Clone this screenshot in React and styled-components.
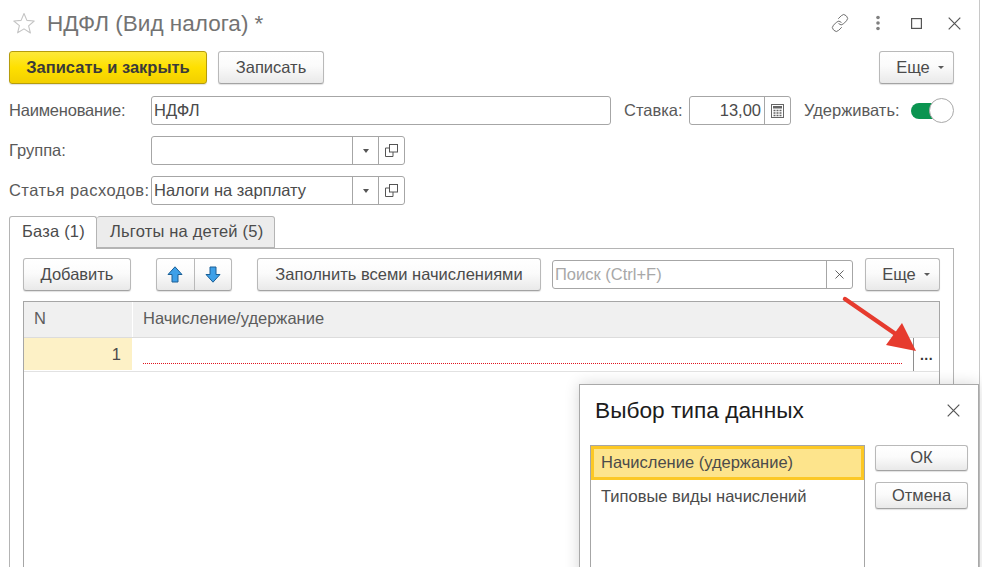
import React from "react";
import styled, { createGlobalStyle } from "styled-components";

const GlobalStyle = createGlobalStyle`
  html, body {
    margin: 0;
    padding: 0;
    background: #fff;
    overflow: hidden;
  }
  * {
    box-sizing: border-box;
  }
`;

const Screen = styled.div`
  position: relative;
  width: 982px;
  height: 567px;
  overflow: hidden;
  background: #fff;
  font-family: "Liberation Sans", Arial, sans-serif;
  font-size: 16.5px;
  color: #4b4b4b;
`;

const Win = styled.div`
  width: 980px;
  height: 567px;
  padding: 0 25px 0 9px;
  border-right: 1px solid #c8c8c8;
  overflow: hidden;
`;

const TitleBar = styled.div`
  height: 51px;
  display: flex;
  align-items: flex-start;
  padding: 12px 0 0 3px;
`;

const PageTitle = styled.div`
  margin-left: 11px;
  font-size: 22.5px;
  line-height: 24px;
  color: #737373;
  flex: 1;
`;

const TitleIcons = styled.div`
  display: flex;
  align-items: center;
  height: 22px;
  margin-right: -19px;
`;

const IconSlot = styled.div`
  width: 38px;
  height: 22px;
  display: flex;
  align-items: center;
  justify-content: center;
`;

const Toolbar = styled.div`
  display: flex;
  align-items: flex-start;
  height: 45px;
`;

const Button = styled.button`
  height: ${(p) => p.$h || 33}px;
  width: ${(p) => p.$w}px;
  margin-left: ${(p) => p.$ml || 0}px;
  padding: 0 0 1px ${(p) => p.$pl || 0}px;
  border: 1px solid #b9b9b9;
  border-bottom-color: #a3a3a3;
  border-radius: 3px;
  background: linear-gradient(#fff 0%, #fbfbfb 45%, #e9e9e9 100%);
  box-shadow: 0 1px 1px rgba(0, 0, 0, 0.12);
  font: inherit;
  color: #4b4b4b;
  display: flex;
  align-items: center;
  justify-content: center;
  flex: none;
`;

const PrimaryButton = styled(Button)`
  border-color: #b59c0c;
  background: linear-gradient(#fde93a 0%, #fee000 50%, #f2cf00 100%);
  font-weight: 700;
  color: #3a3a3a;
`;

const Caret = styled.span`
  width: 0;
  height: 0;
  margin-left: 8px;
  border-left: 3px solid transparent;
  border-right: 3px solid transparent;
  border-top: 3px solid #5a5a5a;
`;

const Spacer = styled.div`
  flex: 1;
`;

const FormRow = styled.div`
  display: flex;
  align-items: center;
  height: 29px;
  margin-bottom: 11px;
`;

const Label = styled.div`
  width: ${(p) => p.$w}px;
  flex: none;
  margin-left: ${(p) => p.$ml || 0}px;
  letter-spacing: ${(p) => p.$ls || 0}px;
  color: #595959;
  white-space: nowrap;
`;

const Field = styled.div`
  width: ${(p) => p.$w}px;
  height: ${(p) => p.$h || 29}px;
  margin-left: ${(p) => p.$ml || 0}px;
  flex: none;
  display: flex;
  border: 1px solid #a6a6a6;
  border-radius: 3px;
  background: #fff;
`;

const FieldText = styled.div`
  flex: 1;
  min-width: 0;
  padding: 0 ${(p) => (p.$right ? "3px" : "2px")};
  line-height: 26px;
  text-align: ${(p) => (p.$right ? "right" : "left")};
  color: ${(p) => (p.$muted ? "#a8a8a8" : "#4b4b4b")};
  white-space: nowrap;
`;

const FieldBtn = styled.div`
  width: ${(p) => p.$w || 26}px;
  flex: none;
  border-left: 1px solid #a6a6a6;
  display: flex;
  align-items: center;
  justify-content: center;
`;

const SmallCaret = styled.span`
  width: 0;
  height: 0;
  border-left: 3.5px solid transparent;
  border-right: 3.5px solid transparent;
  border-top: 4px solid #555;
`;

const Switch = styled.div`
  position: relative;
  width: 43px;
  height: 25px;
  margin-left: 1px;
  flex: none;
  display: flex;
  align-items: center;
`;

const SwitchTrack = styled.div`
  width: 34px;
  height: 16px;
  border-radius: 8px;
  background: #0a9450;
`;

const SwitchKnob = styled.div`
  position: absolute;
  right: 0;
  top: 0;
  width: 25px;
  height: 25px;
  border-radius: 50%;
  background: #fff;
  border: 1px solid #a9a9a9;
`;

const Tabs = styled.div`
  display: flex;
  height: 33px;
  position: relative;
  z-index: 1;
`;

const Tab = styled.div`
  width: ${(p) => p.$w}px;
  height: ${(p) => (p.$active ? 33 : 32)}px;
  border: 1px solid #b4b4b4;
  border-left-width: ${(p) => (p.$active ? 1 : 0)}px;
  border-bottom: ${(p) => (p.$active ? "none" : "1px solid #b4b4b4")};
  border-radius: 3px 3px 0 0;
  background: ${(p) => (p.$active ? "#fff" : "#ececec")};
  padding-left: ${(p) => (p.$active ? 12 : 13)}px;
  letter-spacing: 0.2px;
  line-height: 28px;
  color: #4b4b4b;
`;

const Panel = styled.div`
  height: 340px;
  margin-top: -1px;
  width: 945px;
  padding: 9px 13px 0;
  border: 1px solid #b4b4b4;
  border-bottom: none;
`;

const TableBar = styled.div`
  display: flex;
  align-items: center;
  height: 33px;
  margin-bottom: 10px;
`;

const ArrowGroup = styled.div`
  display: flex;
  width: 76px;
  height: 33px;
  margin-left: 25px;
  flex: none;
  border: 1px solid #b9b9b9;
  border-bottom-color: #a3a3a3;
  border-radius: 3px;
  background: linear-gradient(#fff 0%, #fbfbfb 45%, #e9e9e9 100%);
  box-shadow: 0 1px 1px rgba(0, 0, 0, 0.12);
`;

const ArrowCell = styled.div`
  flex: 1;
  display: flex;
  align-items: center;
  justify-content: center;
  & + & {
    border-left: 1px solid #b9b9b9;
  }
`;

const Table = styled.div`
  width: 917px;
  height: 400px;
  border: 1px solid #a6a6a6;
  border-bottom: none;
`;

const THead = styled.div`
  display: flex;
  height: 36px;
  background: #f0f0f0;
  border-bottom: 1px solid #dcdcdc;
`;

const HeadCell = styled.div`
  width: ${(p) => p.$w}px;
  flex: ${(p) => (p.$w ? "none" : 1)};
  padding-left: 10px;
  line-height: 32px;
  color: #5c5c5c;
  & + & {
    border-left: 1px solid #fff;
  }
`;

const TRow = styled.div`
  display: flex;
  height: 34px;
  border-bottom: 1px solid #e2e2e2;
`;

const NumCell = styled.div`
  width: 108px;
  flex: none;
  background: #fdf1c6;
  padding-right: 11px;
  margin-bottom: 1px;
  text-align: right;
  line-height: 32px;
`;

const EditCell = styled.div`
  flex: 1;
  display: flex;
  padding: 0 0 7px 11px;
`;

const RequiredLine = styled.div`
  flex: 1;
  margin-top: auto;
  margin-right: 11px;
  border-bottom: 1px dotted #e0141e;
`;

const PickBtn = styled.div`
  width: 26px;
  margin-bottom: -7px;
  border-left: 1px solid #8e8e8e;
  text-align: center;
  font-size: 14px;
  font-weight: 700;
  line-height: 34px;
  letter-spacing: 0.4px;
  color: #333;
`;

const Dialog = styled.div`
  position: absolute;
  left: 579px;
  top: 384px;
  width: 400px;
  height: 200px;
  background: #fff;
  border: 1px solid #a9a9a9;
  box-shadow: 0 0 14px rgba(0, 0, 0, 0.16);
  padding: 0 10px;
`;

const DialogHead = styled.div`
  display: flex;
  align-items: center;
  justify-content: space-between;
  height: 51px;
  margin-bottom: 9px;
  padding: 0 8px 0 5px;
`;

const DialogTitle = styled.div`
  font-size: 22.7px;
  color: #1c1c1c;
`;

const DialogBody = styled.div`
  display: flex;
  gap: 10px;
`;

const TypeList = styled.div`
  width: 275px;
  height: 140px;
  flex: none;
  border: 1px solid #a6a6a6;
`;

const TypeItem = styled.div`
  height: 34px;
  padding-left: ${(p) => (p.$selected ? 7 : 10)}px;
  line-height: ${(p) => (p.$selected ? 26 : 32)}px;
  background: ${(p) => (p.$selected ? "#fde48c" : "transparent")};
  border: ${(p) => (p.$selected ? "3px solid #fcc825" : "none")};
`;

const DialogButtons = styled.div`
  display: flex;
  flex-direction: column;
  gap: 11px;
`;

const RedArrow = styled.svg`
  position: absolute;
  left: 840px;
  top: 294px;
`;

const Star = () => (
  <svg width="24" height="22" viewBox="0 0 24 22" fill="none">
    <path d="M12 1.5l2.9 6.9 7.3.6-5.6 4.8 1.8 7.2L12 16.9l-6.4 3.9 1.8-7.2L1.8 9l7.3-.6z" stroke="#c4c4c4" strokeWidth="1.1" strokeLinejoin="round" />
  </svg>
);

const LinkIcon = () => (
  <svg width="22" height="22" viewBox="0 0 22 22" fill="none" stroke="#707070" strokeWidth="1" strokeLinecap="round">
    <path d="M9.500 6.500l2.800-2.800a3.300 3.300 0 0 1 4.800 0l.4.4a3.300 3.300 0 0 1 0 4.700l-3 3a3.300 3.300 0 0 1-4.700 0" />
    <path d="M12.500 15.500l-2.800 2.800a3.300 3.300 0 0 1-4.800 0l-.4-.4a3.300 3.300 0 0 1 0-4.700l3-3a3.300 3.300 0 0 1 4.700 0" />
  </svg>
);

const Dots = () => (
  <svg width="6" height="16" viewBox="0 0 6 16" fill="#808080">
    <circle cx="3" cy="2.500" r="1.800" />
    <circle cx="3" cy="8" r="1.800" />
    <circle cx="3" cy="13.500" r="1.800" />
  </svg>
);

const Cross = ({ size = 13, color = "#555", width = 1.2 }) => (
  <svg width={size} height={size} viewBox="0 0 13 13" fill="none" stroke={color} strokeWidth={width}>
    <path d="M.7.7l11.600 11.600M12.300.7L.7 12.300" />
  </svg>
);

const MaximizeIcon = () => (
  <svg width="11" height="11" viewBox="0 0 11 11" fill="none" stroke="#555" strokeWidth="1.2">
    <rect x=".6" y=".6" width="9.800" height="9.800" />
  </svg>
);

const CopyIcon = () => (
  <svg width="13" height="13" viewBox="0 0 13 13" fill="none" stroke="#555" strokeWidth="1">
    <rect x="4.500" y=".5" width="8" height="7.500" />
    <path d="M4.500 4H.5v8.500H8V8" />
  </svg>
);

const CalcIcon = () => (
  <svg width="13" height="14" viewBox="0 0 13 14" fill="none">
    <rect x=".5" y=".5" width="12" height="13" stroke="#666" />
    <rect x="2" y="2" width="9" height="2.500" fill="#666" />
    <path d="M2.500 6.500h2M5.500 6.500h2M8.500 6.500h2M2.500 9h2M5.500 9h2M8.500 9h2M2.500 11.500h2M5.500 11.500h2M8.500 11.500h2" stroke="#666" strokeWidth="1.300" />
  </svg>
);

const UpArrow = () => (
  <svg width="16" height="17" viewBox="0 0 16 17">
    <path d="M8 .8L15 8.500H11V16H5V8.500H1z" fill="#3ea0e8" stroke="#1a5f96" strokeWidth="1" strokeLinejoin="round" />
  </svg>
);

const DownArrow = () => (
  <svg width="16" height="17" viewBox="0 0 16 17">
    <path d="M8 16.200L15 8.500H11V1H5v7.500H1z" fill="#3ea0e8" stroke="#1a5f96" strokeWidth="1" strokeLinejoin="round" />
  </svg>
);

const Lookup = () => (
  <>
    <FieldBtn><SmallCaret /></FieldBtn>
    <FieldBtn><CopyIcon /></FieldBtn>
  </>
);

export default function App() {
  return (
    <Screen>
      <GlobalStyle />
      <Win>
        <TitleBar>
          <Star />
          <PageTitle>НДФЛ (Вид налога) *</PageTitle>
          <TitleIcons>
            <IconSlot><LinkIcon /></IconSlot>
            <IconSlot><Dots /></IconSlot>
            <IconSlot><MaximizeIcon /></IconSlot>
            <IconSlot><Cross /></IconSlot>
          </TitleIcons>
        </TitleBar>

        <Toolbar>
          <PrimaryButton $w={198}>Записать и закрыть</PrimaryButton>
          <Button $w={106} $ml={11}>Записать</Button>
          <Spacer />
          <Button $w={75} $pl={7}>Еще<Caret /></Button>
        </Toolbar>

        <FormRow>
          <Label $w={142} $ls={-0.2}>Наименование:</Label>
          <Field $w={460}><FieldText>НДФЛ</FieldText></Field>
          <Label $w={65} $ml={13}>Ставка:</Label>
          <Field $w={102}>
            <FieldText $right>13,00</FieldText>
            <FieldBtn><CalcIcon /></FieldBtn>
          </Field>
          <Label $w={106} $ml={13}>Удерживать:</Label>
          <Switch>
            <SwitchTrack />
            <SwitchKnob />
          </Switch>
        </FormRow>

        <FormRow>
          <Label $w={142}>Группа:</Label>
          <Field $w={254}><FieldText /><Lookup /></Field>
        </FormRow>

        <FormRow>
          <Label $w={142} $ls={0.45}>Статья расходов:</Label>
          <Field $w={254}><FieldText>Налоги на зарплату</FieldText><Lookup /></Field>
        </FormRow>

        <Tabs>
          <Tab $active $w={88}>База (1)</Tab>
          <Tab $w={178}>Льготы на детей (5)</Tab>
        </Tabs>

        <Panel>
          <TableBar>
            <Button $w={108}>Добавить</Button>
            <ArrowGroup>
              <ArrowCell><UpArrow /></ArrowCell>
              <ArrowCell><DownArrow /></ArrowCell>
            </ArrowGroup>
            <Button $w={284} $ml={25}>Заполнить всеми начислениями</Button>
            <Field $w={301} $ml={11}>
              <FieldText $muted>Поиск (Ctrl+F)</FieldText>
              <FieldBtn><Cross size={9} color="#444" /></FieldBtn>
            </Field>
            <Button $w={75} $ml={12} $pl={7}>Еще<Caret /></Button>
          </TableBar>

          <Table>
            <THead>
              <HeadCell $w={108}>N</HeadCell>
              <HeadCell>Начисление/удержание</HeadCell>
            </THead>
            <TRow>
              <NumCell>1</NumCell>
              <EditCell>
                <RequiredLine />
                <PickBtn>...</PickBtn>
              </EditCell>
            </TRow>
          </Table>
        </Panel>
      </Win>

      <RedArrow width="80" height="62" viewBox="0 0 80 62">
        <path d="M5 5L60 43" stroke="#e63b2e" strokeWidth="4.500" strokeLinecap="round" />
        <path d="M76 57L46 51L62 29z" fill="#e63b2e" />
      </RedArrow>

      <Dialog>
        <DialogHead>
          <DialogTitle>Выбор типа данных</DialogTitle>
          <Cross size={13} color="#555" />
        </DialogHead>
        <DialogBody>
          <TypeList>
            <TypeItem $selected>Начисление (удержание)</TypeItem>
            <TypeItem>Типовые виды начислений</TypeItem>
          </TypeList>
          <DialogButtons>
            <Button $w={93} $h={26}>ОК</Button>
            <Button $w={93} $h={27}>Отмена</Button>
          </DialogButtons>
        </DialogBody>
      </Dialog>
    </Screen>
  );
}
